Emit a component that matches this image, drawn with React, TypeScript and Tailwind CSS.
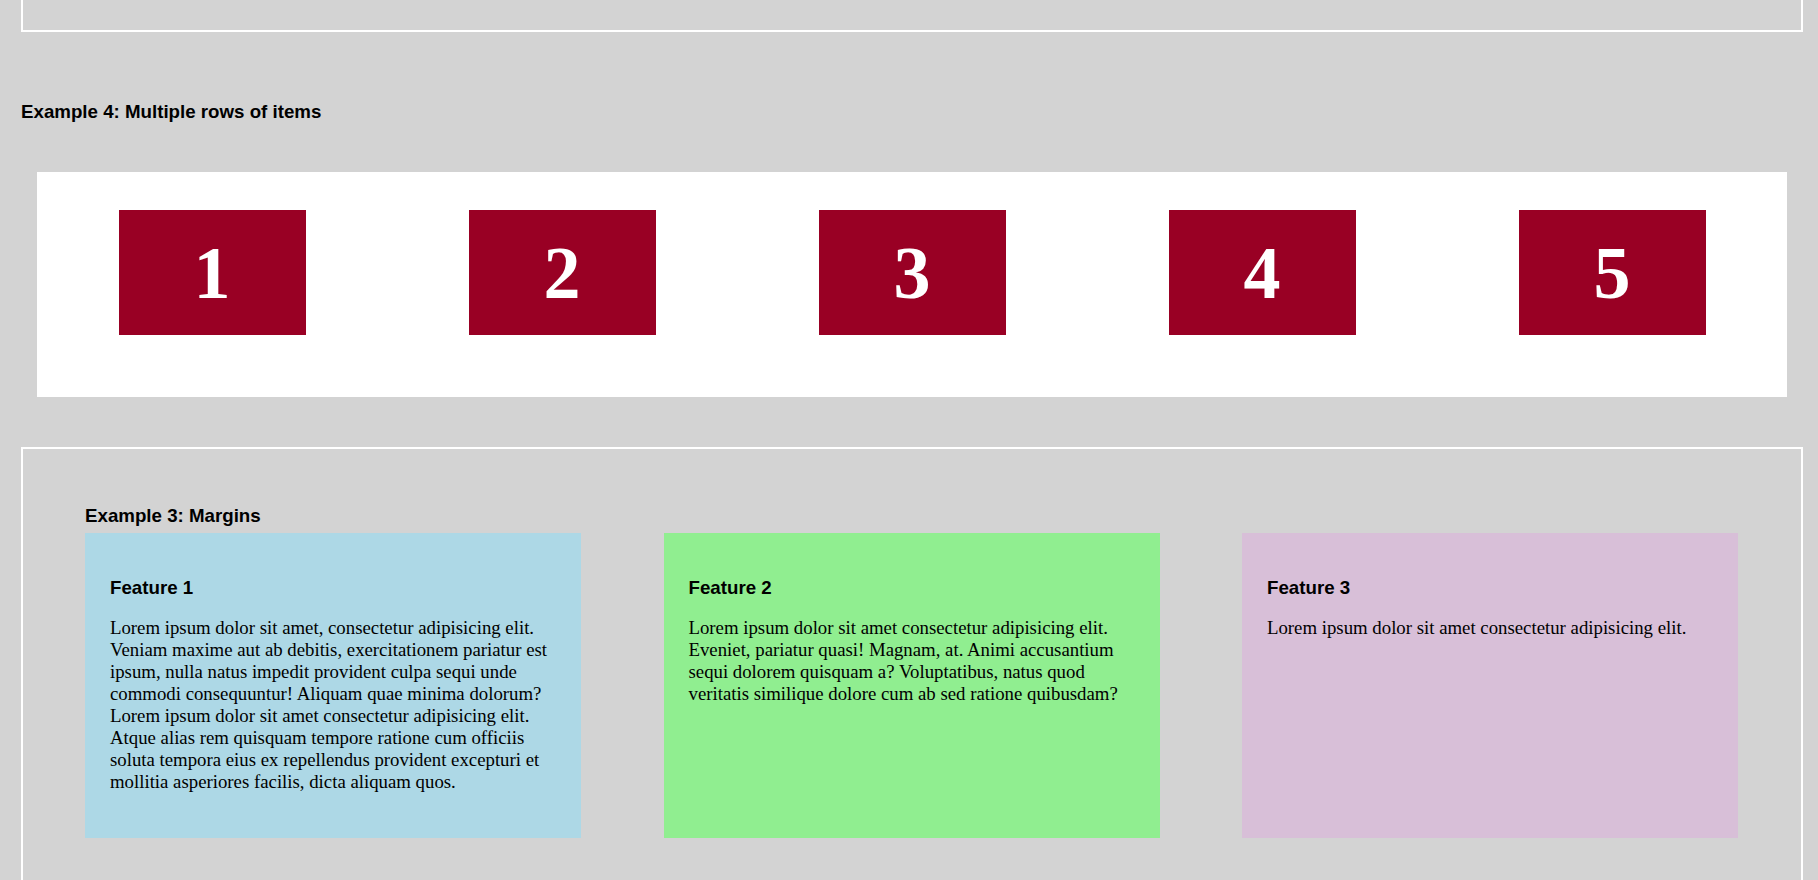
import React from "react";

const features = [
  {
    title: "Feature 1",
    bg: "bg-[#add8e6]",
    text: "Lorem ipsum dolor sit amet, consectetur adipisicing elit. Veniam maxime aut ab debitis, exercitationem pariatur est ipsum, nulla natus impedit provident culpa sequi unde commodi consequuntur! Aliquam quae minima dolorum? Lorem ipsum dolor sit amet consectetur adipisicing elit. Atque alias rem quisquam tempore ratione cum officiis soluta tempora eius ex repellendus provident excepturi et mollitia asperiores facilis, dicta aliquam quos.",
  },
  {
    title: "Feature 2",
    bg: "bg-[#90ee90]",
    text: "Lorem ipsum dolor sit amet consectetur adipisicing elit. Eveniet, pariatur quasi! Magnam, at. Animi accusantium sequi dolorem quisquam a? Voluptatibus, natus quod veritatis similique dolore cum ab sed ratione quibusdam?",
  },
  {
    title: "Feature 3",
    bg: "bg-[#d8bfd8]",
    text: "Lorem ipsum dolor sit amet consectetur adipisicing elit.",
  },
];

export default function App() {
  return (
    <div className="min-h-screen w-full overflow-hidden bg-[#d3d3d3] font-['Liberation_Sans',Arial,sans-serif] text-black">
      {/* Top box (continues above the viewport) */}
      <div className="ml-[21px] h-[32px] w-[1782px] border-2 border-t-0 border-white" />

      {/* Example 4 */}
      <div className="ml-[21px] w-[1782px]">
        <h3 className="mt-[69px] text-[18.72px] font-bold leading-[normal]">
          Example 4: Multiple rows of items
        </h3>
        <div className="mx-[16px] mt-[49px] flex h-[225px] items-start justify-around bg-white pt-[38px]">
          {[1, 2, 3, 4, 5].map((n) => (
            <div
              key={n}
              className="flex h-[125px] w-[187px] items-center justify-center bg-[#990024] font-['Liberation_Serif','Times_New_Roman',serif] text-[74px] font-bold leading-none text-white"
            >
              {n}
            </div>
          ))}
        </div>
      </div>

      {/* Example 3 */}
      <div className="ml-[21px] mt-[50px] w-[1782px] border-2 border-white pb-[60px] pl-[62px] pr-[63px] pt-[56px]">
        <h3 className="mb-[6px] text-[18.72px] font-bold leading-[normal]">
          Example 3: Margins
        </h3>
        <div className="flex justify-between">
          {features.map((f) => (
            <div key={f.title} className={`w-[496px] p-[25px] ${f.bg}`}>
              <h3 className="my-[18.72px] text-[18.72px] font-bold leading-[normal]">
                {f.title}
              </h3>
              <p className="mb-[19.2px] font-['Liberation_Serif','Times_New_Roman',serif] text-[18.8px] leading-[22px]">
                {f.text}
              </p>
            </div>
          ))}
        </div>
      </div>
    </div>
  );
}
